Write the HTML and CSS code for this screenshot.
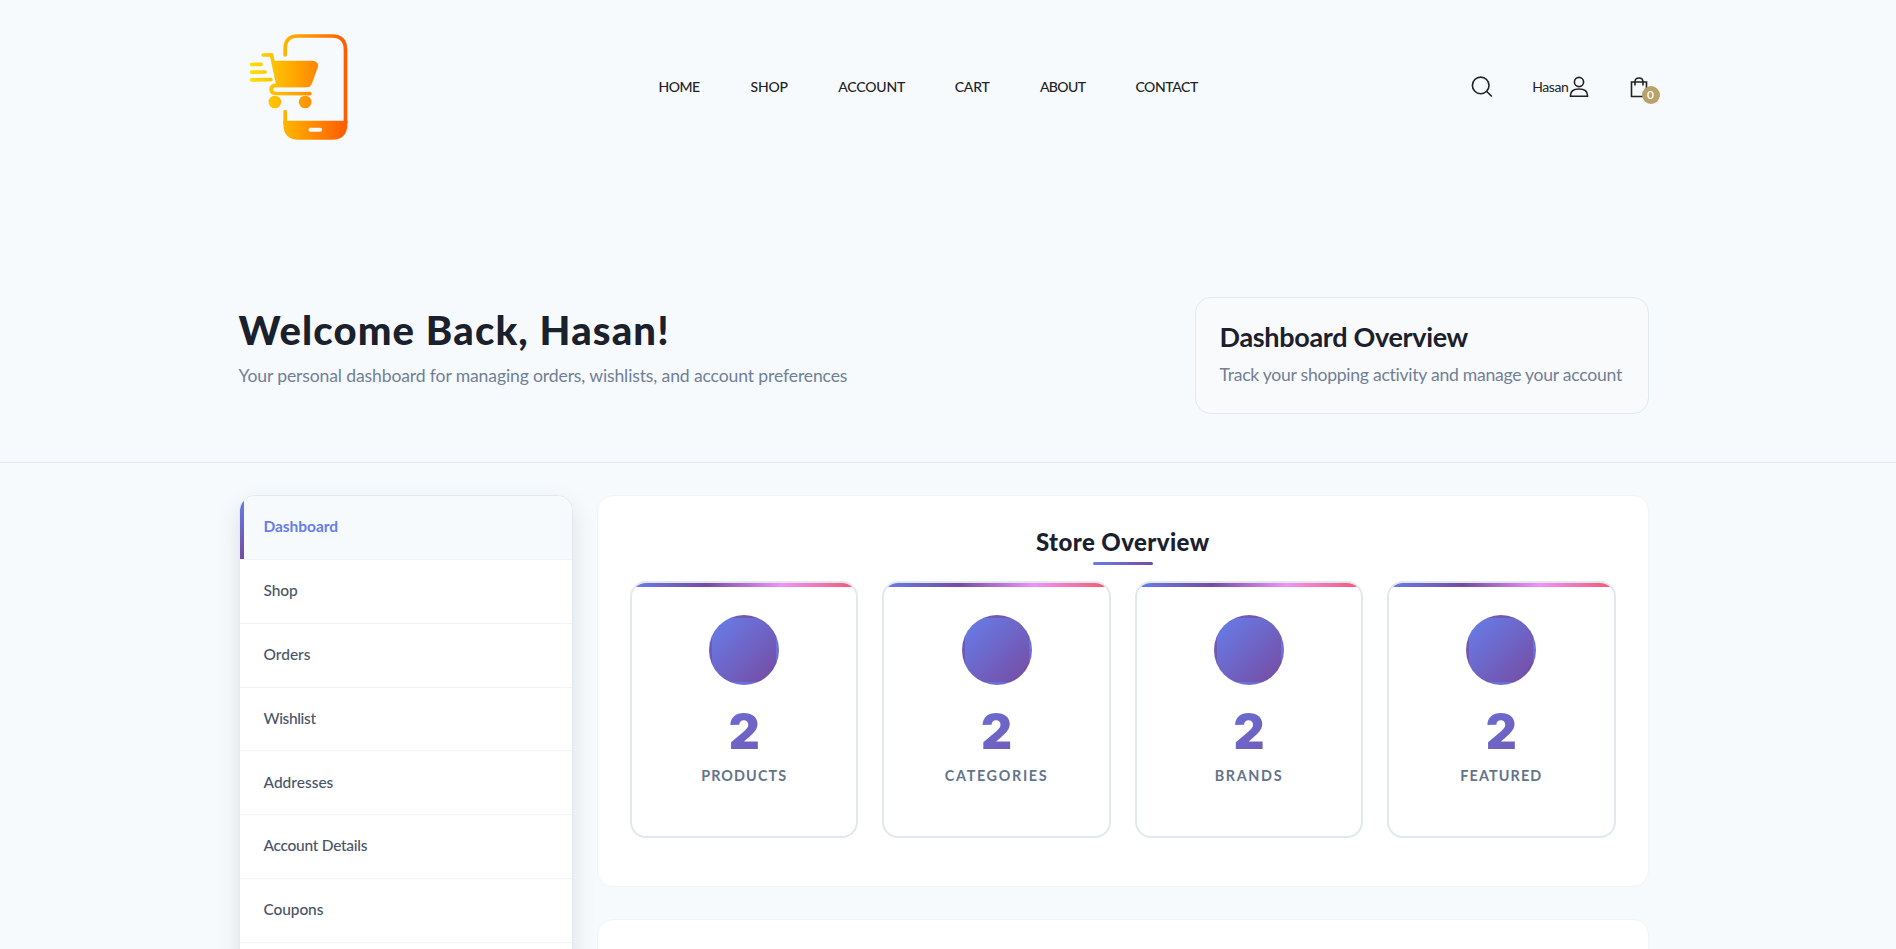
FILE: index.html
```
<!DOCTYPE html>
<html lang="en">
<head>
<meta charset="utf-8">
<title>Dashboard</title>
<link rel="stylesheet" href="styles.css">
</head>
<body>
<header class="header container">
  <a class="logo">
    <svg width="131.5" height="130" viewBox="25.5 0 394.5 390">
      <defs>
        <linearGradient id="warm" gradientUnits="userSpaceOnUse" x1="60" y1="0" x2="354" y2="0">
          <stop offset="0" stop-color="#ffe000"/><stop offset=".45" stop-color="#ffa800"/><stop offset="1" stop-color="#ff5a00"/>
        </linearGradient>
      </defs>
      <g fill="none" stroke="url(#warm)" stroke-width="11" stroke-linecap="round" stroke-linejoin="round">
        <path d="M167 105V86Q167 48 205 48H308Q348 48 348 90V310"/>
        <path d="M167 275V310"/>
        <path d="M66 133.500L95 133M66 156.500L107 156M66 179.500L124 179"/>
        <path d="M101 105L126 104.500L146 196H136Q125 198 125 208Q125 220 138 220.500L241 221"/>
      </g>
      <g fill="url(#warm)">
        <path d="M134 122H250Q269 124 265 142L247 191Q243 202 231 202H145Z"/>
        <circle cx="136" cy="246" r="19"/>
        <circle cx="227" cy="246" r="19"/>
        <path fill-rule="evenodd" d="M161.500 302H353.500V312Q353.500 359 308 359H207Q161.500 359 161.500 312ZM243 323A6 6 0 0 0 243 335H272A6 6 0 0 0 272 323Z"/>
      </g>
      <path d="M140 208.500H236" stroke="#f6fafd" stroke-width="13"/>
      <path d="M140 202.500H231" stroke="url(#warm)" stroke-width="1"/>
    </svg>
  </a>
  <nav class="nav">
    <a class="nav-home">HOME</a><a class="nav-shop">SHOP</a><a class="nav-account">ACCOUNT</a><a class="nav-cart">CART</a><a class="nav-about">ABOUT</a><a class="nav-contact">CONTACT</a>
  </nav>
  <div class="tools">
    <svg class="search" width="22" height="22" viewBox="0 0 22 22"><circle cx="9.700" cy="9.400" r="8.300"/><path d="M15.500 15.200L20.800 20.500"/></svg>
    <a class="user">Hasan<svg width="20" height="22" viewBox="0 0 20 22"><circle cx="10" cy="6" r="4.600"/><path d="M1.500 20.300V19.500C1.500 15 5 13 10 13S18.500 15 18.500 19.500V20.300Z"/></svg></a>
    <a class="bag"><svg width="18" height="22" viewBox="0 0 18 22"><path d="M1.500 6H16.500V20.500H1.500ZM5 9.500V6Q5 2 9 2T13 6V9.500"/></svg><span class="badge">0</span></a>
  </div>
</header>

<section class="hero">
  <div class="hero-row container">
    <div class="welcome">
      <h1>Welcome Back, Hasan!</h1>
      <p>Your personal dashboard for managing orders, wishlists, and account preferences</p>
    </div>
    <div class="overview">
      <h2>Dashboard Overview</h2>
      <p>Track your shopping activity and manage your account</p>
    </div>
  </div>
</section>

<main class="content container">
  <aside class="sidebar">
    <a class="active">Dashboard</a>
    <a class="tight-1">Shop</a>
    <a>Orders</a>
    <a class="tight-3">Wishlist</a>
    <a>Addresses</a>
    <a class="tight-2">Account Details</a>
    <a class="tight-1">Coupons</a>
  </aside>
  <div class="panels">
    <section class="panel">
      <h2 class="panel-title">Store Overview</h2>
      <div class="stats">
        <div class="stat"><div class="stat-icon"></div><div class="stat-number">2</div><div class="stat-label">PRODUCTS</div></div>
        <div class="stat"><div class="stat-icon"></div><div class="stat-number">2</div><div class="stat-label wide">CATEGORIES</div></div>
        <div class="stat"><div class="stat-icon"></div><div class="stat-number">2</div><div class="stat-label wide">BRANDS</div></div>
        <div class="stat"><div class="stat-icon"></div><div class="stat-number">2</div><div class="stat-label">FEATURED</div></div>
      </div>
    </section>
    <section class="panel panel-next"></section>
  </div>
</main>
</body>
</html>
```
FILE: styles.css
```
* { box-sizing: border-box; }
body {
  margin: 0;
  height: 949px;
  overflow: hidden;
  background: #f6fafd;
  color: #1a202c;
  font-family: Lato, "Open Sans", sans-serif;
}
h1, h2, p { margin: 0; }
.container { width: 1410px; margin-left: 238.5px; }

.header { display: flex; align-items: center; height: 174px; }
.logo { display: flex; width: 420.500px; margin: -4px 0 0 -.5px; }
.nav { display: flex; gap: 50px; font-size: 14px; font-weight: 500; line-height: 20px; color: #222; white-space: nowrap; }
.nav a { flex: none; }
.nav-home { width: 42px; letter-spacing: -.5px; }
.nav-shop { width: 37.700px; letter-spacing: -.2px; }
.nav-account { width: 66.500px; letter-spacing: -.15px; }
.nav-cart { width: 35.200px; letter-spacing: -.15px; }
.nav-about { width: 45.500px; letter-spacing: -.6px; }
.nav-contact { letter-spacing: -.4px; }
.tools { display: flex; align-items: center; margin: 0 1px 0 auto; color: #222; }
.tools svg { display: block; fill: none; stroke: #222; stroke-width: 1.600; }
.user { display: flex; align-items: center; margin-left: 39px; font-size: 14px; letter-spacing: -.4px; line-height: 20px; }
.user svg { margin-top: -1px; }
.bag { position: relative; margin-left: 41px; }
.badge {
  position: absolute; left: 12px; top: 10px;
  width: 18px; height: 18px; border-radius: 50%;
  background: #b9a16b; color: #fff;
  font-size: 12px; font-weight: 600; line-height: 17px; text-align: center;
}

.hero { height: 289px; padding-top: 123px; border-bottom: 1px solid #e2e8f0; }
.hero-row { display: flex; justify-content: space-between; }
.welcome { padding-top: 9px; }
.welcome h1 { font-size: 40px; line-height: 48px; font-weight: 900; letter-spacing: 1.15px; white-space: nowrap; }
.welcome p { margin-top: 9px; font-size: 17.600px; line-height: 26px; letter-spacing: -.14px; color: #718096; }
.overview {
  width: 454px; height: 117px; padding: 23px 24px 0;
  border: 1px solid #e2e8f0; border-radius: 16px; background: #f9fafc; white-space: nowrap;
}
.overview h2 { font-size: 27px; line-height: 32px; font-weight: 700; letter-spacing: -.32px; }
.overview p { margin-top: 9px; font-size: 17.600px; line-height: 26px; letter-spacing: -.27px; color: #718096; }

.content { display: flex; align-items: flex-start; gap: 24px; padding-top: 32px; }
.sidebar {
  width: 334.500px; height: 480px; overflow: hidden;
  border: 1px solid #e2e8f0; border-radius: 16px; background: #fff;
  box-shadow: 0 10px 25px rgba(0, 0, 0, .1);
}
.sidebar a {
  display: block; position: relative; height: 63.850px; padding: 18.200px 24px 0;
  border-bottom: 1px solid #f1f3f9;
  font-size: 15.500px; font-weight: 500; line-height: 24px; color: #4a5568;
}
.sidebar .active { background: #f6fafd; color: #667eea; font-weight: 700; letter-spacing: -.05px; }
.sidebar .active::before {
  content: ""; position: absolute; left: 0; top: 0; bottom: 0; width: 4px;
  background: linear-gradient(#667eea, #764ba2);
}
.sidebar .tight-1 { letter-spacing: -.12px; }
.sidebar .tight-2 { letter-spacing: -.277px; }
.sidebar .tight-3 { letter-spacing: -.366px; }

.panels { display: flex; flex-direction: column; gap: 32px; flex: 1; }
.panel {
  padding: 31px 32px 48px;
  border: 1px solid #f1f3f6; border-radius: 16px; background: #fff;
}
.panel-next { height: 120px; }
.panel-title {
  position: relative; height: 54px;
  font-size: 24px; font-weight: 900; line-height: 30px; letter-spacing: .42px; text-align: center;
}
.panel-title::after {
  content: ""; position: absolute; left: 50%; top: 35px;
  width: 60px; height: 3px; margin-left: -30px; border-radius: 2px;
  background: linear-gradient(90deg, #667eea, #764ba2);
}
.stats { display: grid; grid-template-columns: repeat(4, 1fr); gap: 24px; }
.stat {
  position: relative; overflow: hidden; height: 257px; padding-top: 32px;
  border: 2px solid #e2e8f0; border-radius: 16px; text-align: center;
}
.stat::before {
  content: ""; position: absolute; left: 0; right: 0; top: 0; height: 4px;
  background: linear-gradient(90deg, #667eea, #764ba2, #f093fb, #f5576c);
}
.stat-icon {
  width: 70px; height: 70px; margin: 0 auto; border: 3px solid transparent; border-radius: 50%;
  background: linear-gradient(135deg, #667eea, #764ba2);
}
.stat-number {
  margin: 18px 32px 5px; font-family: Inter, sans-serif; font-size: 48px; font-weight: 900; line-height: 58px;
  background: linear-gradient(135deg, #667eea, #764ba2);
  -webkit-background-clip: text; background-clip: text; color: transparent;
}
.stat-label { font-size: 14.400px; font-weight: 700; line-height: 20px; letter-spacing: 1.1px; color: #64748b; }
.stat-label.wide { letter-spacing: 1.65px; }
```
